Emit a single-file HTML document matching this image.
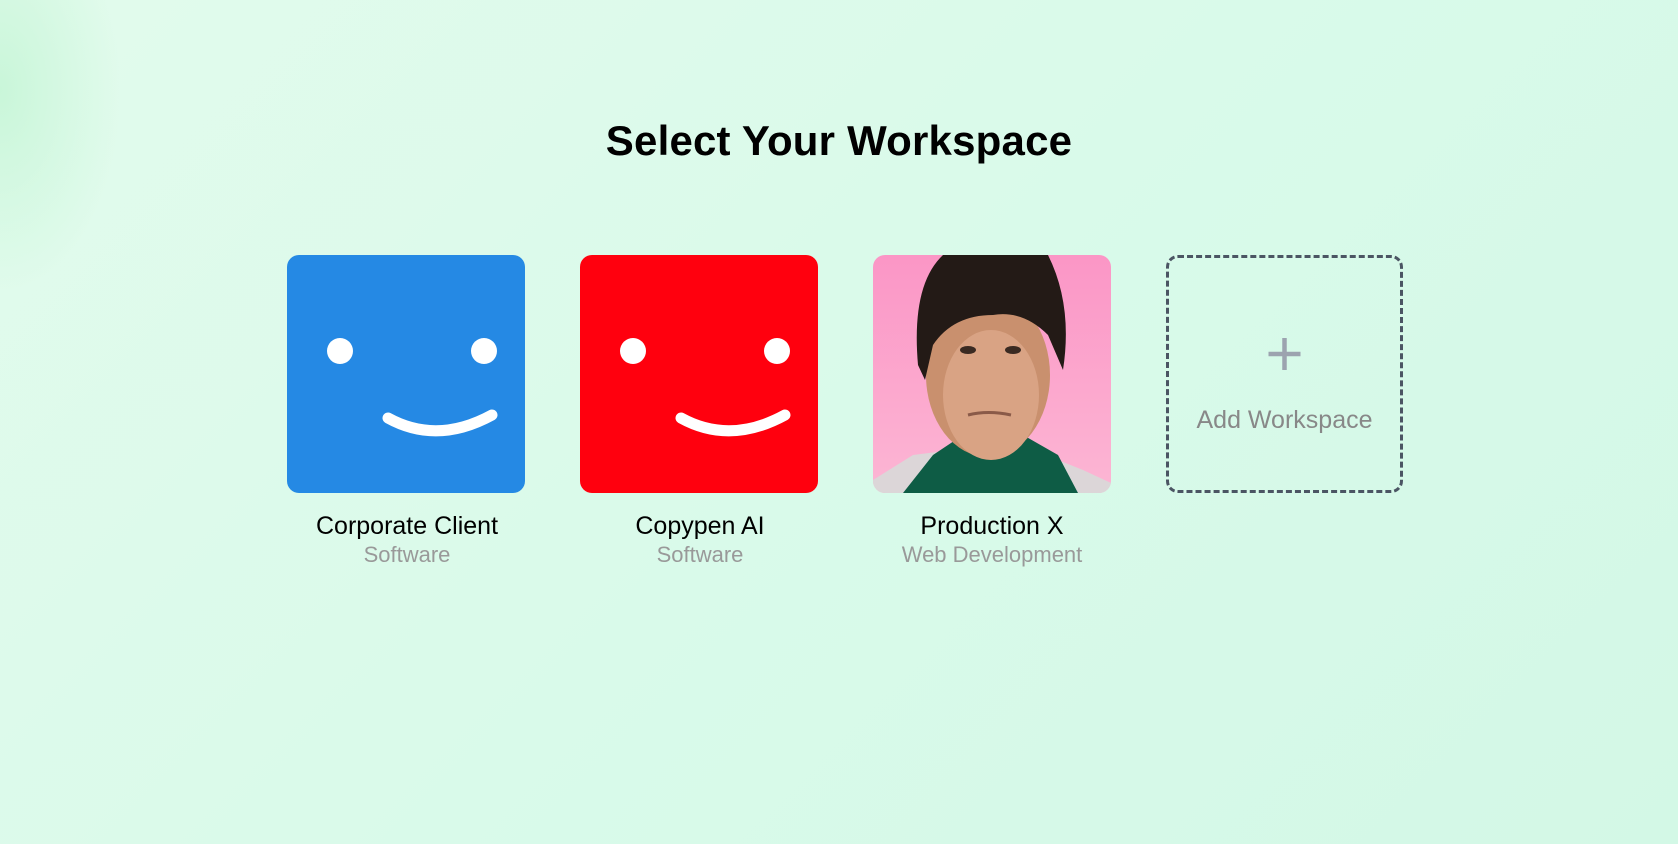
<!DOCTYPE html>
<html><head><meta charset="utf-8"><style>
html,body{margin:0;padding:0}
body{width:1678px;height:844px;overflow:hidden;font-family:"Liberation Sans",sans-serif;
background:radial-gradient(ellipse 120px 200px at 0 90px,#c9f6d9 0,rgba(220,250,233,0) 100%),linear-gradient(135deg,#e2fbec 0%,#d9faea 50%,#d3f8e6 100%);position:relative}
h1{position:absolute;left:0;right:0;top:117px;margin:0;text-align:center;font-size:42px;font-weight:700;color:#000;letter-spacing:0.2px}
.card{position:absolute;top:255px;width:238px;height:238px;border-radius:12px;overflow:hidden}
.name{position:absolute;top:512px;width:300px;text-align:center;font-size:25px;color:#000}
.sub{position:absolute;top:542px;width:300px;text-align:center;font-size:22px;color:#999}
.add{position:absolute;left:1166px;top:255px;width:231px;height:232px;border:3px dashed #4b5563;border-radius:12px}
</style></head><body>
<h1>Select Your Workspace</h1>

<div class="card" style="left:287px;background:#2589e4">
<svg width="238" height="238"><circle cx="53" cy="96" r="13" fill="#fff"/><circle cx="197" cy="96" r="13" fill="#fff"/><path d="M101 163 Q150 190 205 160" stroke="#fff" stroke-width="11" fill="none" stroke-linecap="round"/></svg></div>
<div class="name" style="left:257px">Corporate Client</div>
<div class="sub" style="left:257px">Software</div>

<div class="card" style="left:580px;background:#ff000e">
<svg width="238" height="238"><circle cx="53" cy="96" r="13" fill="#fff"/><circle cx="197" cy="96" r="13" fill="#fff"/><path d="M101 163 Q150 190 205 160" stroke="#fff" stroke-width="11" fill="none" stroke-linecap="round"/></svg></div>
<div class="name" style="left:550px">Copypen AI</div>
<div class="sub" style="left:550px">Software</div>

<div class="card" style="left:873px;background:linear-gradient(#fb96c6,#fcb6d4)">
<svg width="238" height="238">
<path d="M0 225 L40 200 L80 195 L160 195 L210 215 L238 228 L238 238 L0 238Z" fill="#dcd6d8"/>
<path d="M30 238 L60 200 L90 180 L150 180 L185 200 L205 238Z" fill="#0e5c45"/>
<ellipse cx="115" cy="120" rx="62" ry="82" fill="#c9906e"/>
<ellipse cx="118" cy="140" rx="48" ry="65" fill="#d9a384"/>
<path d="M45 110 Q38 30 70 0 L175 0 Q200 50 190 115 L175 80 Q150 55 120 60 Q80 60 60 90 L52 125Z" fill="#231a16"/>
<ellipse cx="95" cy="95" rx="8" ry="4" fill="#3a2a22"/><ellipse cx="140" cy="95" rx="8" ry="4" fill="#3a2a22"/>
<path d="M95 160 Q115 155 138 160" stroke="#8a5a48" stroke-width="3" fill="none"/>
</svg></div>
<div class="name" style="left:842px">Production X</div>
<div class="sub" style="left:842px">Web Development</div>

<div class="add">
<svg width="231" height="232" style="position:absolute;left:0;top:0"><path d="M115.5 80 V112 M99.5 96 H131.5" stroke="#9ca3af" stroke-width="4.5"/></svg>
<div style="position:absolute;top:148px;width:231px;text-align:center;font-size:25px;color:#888">Add Workspace</div>
</div>
</body></html>
